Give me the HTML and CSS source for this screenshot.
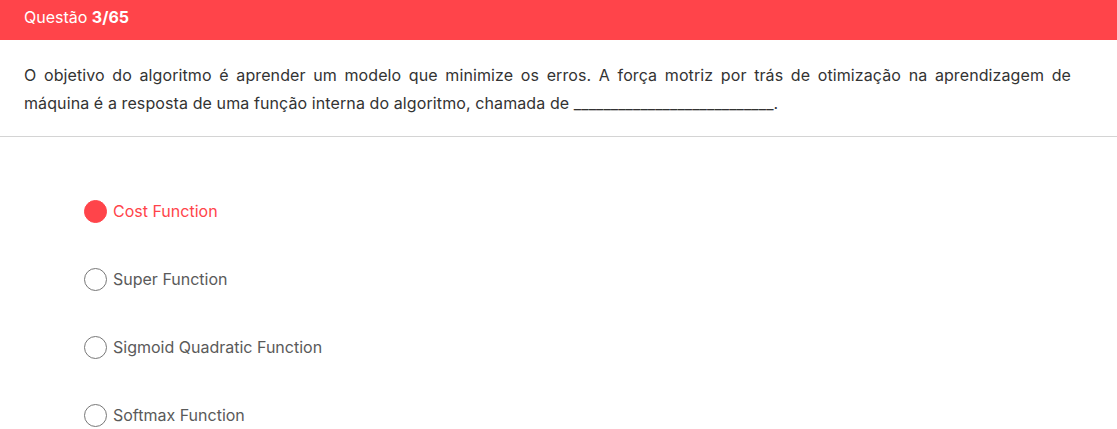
FILE: index.html
```html
<!DOCTYPE html>
<html lang="pt">
<head>
<meta charset="utf-8">
<link rel="stylesheet" href="styles.css">
</head>
<body>
<header class="bar">Questão <strong>3/65</strong></header>
<p class="statement">O objetivo do algoritmo é aprender um modelo que minimize os erros. A força motriz por trás de otimização na aprendizagem de máquina é a resposta de uma função interna do algoritmo, chamada de ___________________________.</p>
<hr class="rule">
<ul class="options">
  <li class="option selected"><span class="radio"></span>Cost Function</li>
  <li class="option"><span class="radio"></span>Super Function</li>
  <li class="option"><span class="radio"></span>Sigmoid Quadratic Function</li>
  <li class="option"><span class="radio"></span>Softmax Function</li>
</ul>
</body>
</html>
```
FILE: styles.css
```css
html, body { margin: 0; padding: 0; background: #fff; }
body { font-family: Inter, "Open Sans", sans-serif; color: #333; overflow: hidden; }
.bar {
  background: #ff444a;
  color: #fff;
  height: 40px;
  line-height: 34px;
  padding: 0 24px;
  font-size: 16px;
}
.bar strong { font-weight: 700; }
.statement {
  margin: 0;
  padding: 21px 46px 19px 24px;
  font-size: 16px;
  letter-spacing: 0.1px;
  line-height: 28px;
  text-align: justify;
  color: #333;
}
.rule { margin: 0; border: 0; border-top: 1px solid #d4d4d4; }
.options { list-style: none; margin: 0; padding: 62px 0 0 84px; }
.option {
  display: flex;
  align-items: center;
  gap: 6px;
  height: 24px;
  margin-bottom: 44px;
  font-size: 16px;
  color: #5a5a5a;
}
.option:last-child { margin-bottom: 0; }
.radio {
  width: 21px; height: 21px;
  border: 1px solid #777;
  border-radius: 50%;
  box-sizing: content-box;
  flex: none;
}
.selected { color: #ff444a; }
.selected .radio { background: #ff444a; border-color: #ff444a; }
```
